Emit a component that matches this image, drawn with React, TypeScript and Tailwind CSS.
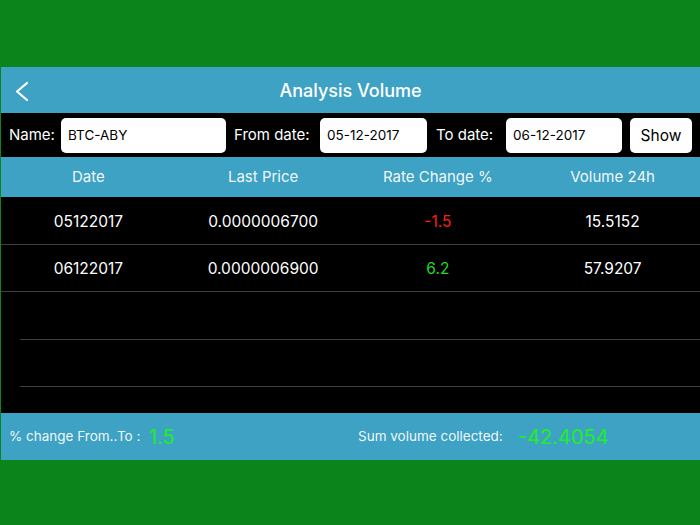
const rows = [
  { date: '05122017', price: '0.0000006700', change: '-1.5', volume: '15.5152', up: false },
  { date: '06122017', price: '0.0000006900', change: '6.2', volume: '57.9207', up: true },
];

const font = { fontFamily: 'Inter, "Liberation Sans", sans-serif' };

function Field({ value, className }: { value: string; className: string }) {
  return (
    <div className={`flex h-[35px] items-center rounded-[5px] bg-white px-[7px] pt-[1px] text-[13.5px] text-black ${className}`}>
      {value}
    </div>
  );
}

export default function App() {
  return (
    <div className="flex h-[525px] w-[700px] flex-col bg-[#0b841b]" style={font}>
      <div className="h-[67px]" />
      <div className="ml-px flex flex-col">
        <div className="relative flex h-[46px] items-center justify-center bg-[#3ea2c4]">
          <svg className="absolute left-[13px] top-[14px]" width="16" height="21" viewBox="0 0 16 21" fill="none">
            <polyline points="13,2 3,10.5 13,19" stroke="white" strokeWidth="2.2" strokeLinecap="round" strokeLinejoin="round" />
          </svg>
          <h1 className="text-[18px] font-medium text-white">Analysis Volume</h1>
        </div>

        <div className="flex h-[44px] items-center bg-black text-[15px] text-white">
          <span className="ml-[8px] w-[52px] pt-[1px]">Name:</span>
          <Field value="BTC-ABY" className="w-[165px]" />
          <span className="ml-[8px] w-[86px] pt-[1px]">From date:</span>
          <Field value="05-12-2017" className="w-[107px]" />
          <span className="ml-[9px] w-[70px] pt-[1px]">To date:</span>
          <Field value="06-12-2017" className="w-[116px]" />
          <button className="ml-[8px] flex h-[35px] w-[62px] items-center justify-center rounded-[5px] bg-white pt-[1px] text-[15.5px] text-black">
            Show
          </button>
        </div>

        <div className="grid h-[40px] grid-cols-4 items-center bg-[#3ea2c4] pt-[1px] text-center text-[15px] text-white/95">
          <span>Date</span>
          <span>Last Price</span>
          <span>Rate Change %</span>
          <span>Volume 24h</span>
        </div>

        <div className="flex h-[216px] flex-col overflow-hidden bg-black">
          {rows.map((row) => (
            <div
              key={row.date}
              className="grid h-[47.5px] shrink-0 grid-cols-4 items-center border-b-[1.5px] border-[#3f3f3f] pt-[2px] text-center text-[15.5px] text-white"
            >
              <span>{row.date}</span>
              <span>{row.price}</span>
              <span className={row.up ? 'text-[#22d81f]' : 'text-[#ff1d1d]'}>{row.change}</span>
              <span>{row.volume}</span>
            </div>
          ))}
          {[0, 1].map((i) => (
            <div key={i} className="ml-[19px] h-[47.5px] shrink-0 border-b-[1.5px] border-[#3f3f3f]" />
          ))}
        </div>

        <div className="flex h-[47px] items-center bg-[#3ea2c4] text-[13.5px] text-white/95">
          <div className="flex w-[349px] items-center pl-[8px]">
            <span className="w-[140px]">% change From..To :</span>
            <span className="text-[20px] text-[#1ff01f]">1.5</span>
          </div>
          <div className="flex items-center pl-[8px]">
            <span className="w-[160px]">Sum volume collected:</span>
            <span className="text-[20px] text-[#1ff01f]">-42.4054</span>
          </div>
        </div>
      </div>
    </div>
  );
}
